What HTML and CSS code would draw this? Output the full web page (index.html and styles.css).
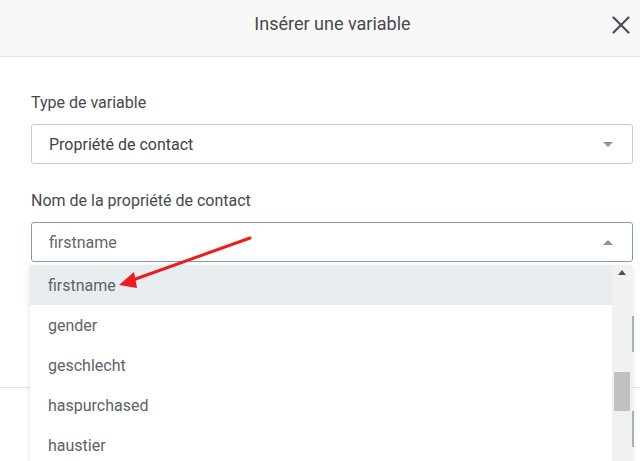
FILE: index.html
```html
<!DOCTYPE html>
<html lang="fr">
<head>
<meta charset="utf-8">
<title>Insérer une variable</title>
<link rel="stylesheet" href="styles.css">
</head>
<body>
<div class="modal">
  <header class="modal-header">
    <span></span>
    <h1 class="modal-title">Insérer une variable</h1>
    <button class="close" aria-label="Fermer">
      <svg width="18" height="18" viewBox="0 0 18 18"><path d="M1.5 1.5 L16.5 16.5 M16.5 1.5 L1.5 16.5" stroke="#454f55" stroke-width="2.2" stroke-linecap="round" fill="none"/></svg>
    </button>
  </header>
  <main class="modal-body">
    <div class="field">
      <label class="label">Type de variable</label>
      <div class="select">
        <span class="value dark">Propriété de contact</span>
        <span class="caret down"></span>
      </div>
    </div>
    <div class="field">
      <label class="label">Nom de la propriété de contact</label>
      <div class="select active">
        <span class="value">firstname</span>
        <span class="caret up"></span>
      </div>
    </div>
  </main>
  <footer class="modal-footer">
    <span class="btn-edge e1"></span>
    <span class="btn-edge e2"></span>
  </footer>

  <div class="dropdown">
    <ul class="options">
      <li class="option selected">firstname</li>
      <li class="option">gender</li>
      <li class="option">geschlecht</li>
      <li class="option">haspurchased</li>
      <li class="option">haustier</li>
    </ul>
    <div class="scrollbar">
      <span class="sb-up"></span>
      <span class="sb-thumb"></span>
    </div>
  </div>

  <svg class="arrow" width="640" height="461" viewBox="0 0 640 461">
    <line x1="250" y1="238" x2="130" y2="281" stroke="#ee1c1c" stroke-width="3" stroke-linecap="round"/>
    <polygon points="119,285 134,272 137,288" fill="#ee1c1c"/>
  </svg>
</div>
</body>
</html>
```
FILE: styles.css
```css
* { box-sizing: border-box; }
html, body {
  margin: 0;
  padding: 0;
  width: 640px;
  height: 461px;
  overflow: hidden;
  background: #fff;
  font-family: Roboto, "Noto Sans", sans-serif;
}
.modal {
  position: relative;
  width: 640px;
  height: 461px;
  display: flex;
  flex-direction: column;
}
.modal-header {
  height: 57px;
  flex: none;
  background: #f8f8f8;
  border-bottom: 1px solid #e4e4e4;
  display: grid;
  grid-template-columns: 60px 1fr 60px;
  align-items: start;
  padding: 11px 0 0 25px;
}
.modal-title {
  margin: 0;
  text-align: center;
  font-size: 18px;
  line-height: 26px;
  font-weight: 400;
  color: #464a4d;
}
.close {
  border: 0;
  background: none;
  padding: 0;
  justify-self: end;
  margin-right: 9px;
  margin-top: 4px;
  width: 20px;
  height: 20px;
  display: flex;
  align-items: center;
  justify-content: center;
}
.modal-body {
  flex: none;
  padding: 36px 7px 0 31px;
  display: flex;
  flex-direction: column;
  gap: 27px;
}
.field {
  display: flex;
  flex-direction: column;
  gap: 11px;
}
.label {
  font-size: 16px;
  color: #444a4e;
  line-height: 20px;
}
.select {
  height: 40px;
  border: 1px solid #c7ccd0;
  border-radius: 3px;
  display: flex;
  align-items: center;
  justify-content: space-between;
  padding: 0 19px 0 17px;
}
.select.active { border-color: #7f9ea6; }
.value {
  font-size: 16px;
  color: #62686c;
}
.value.dark { color: #3d4246; }
.caret {
  width: 0;
  height: 0;
  border-left: 5px solid transparent;
  border-right: 5px solid transparent;
}
.caret.down { border-top: 5px solid #8b949a; }
.caret.up { border-bottom: 5px solid #8b949a; }

.modal-footer {
  position: relative;
  margin-top: 125px;
  border-top: 1px solid #e4e4e4;
  flex: 1;
}
.btn-edge {
  position: absolute;
  left: 632px;
  width: 2px;
  background: #a9bcc3;
}
.e1 { top: -72px; height: 36px; }
.e2 { top: 23px; height: 36px; }

.dropdown {
  position: absolute;
  left: 30px;
  top: 265px;
  width: 602px;
  height: 200px;
  background: #fff;
  display: flex;
  box-shadow: 0 2px 6px rgba(0,0,0,0.12);
}
.options {
  list-style: none;
  margin: 0;
  padding: 0;
  flex: 1;
}
.option {
  height: 40px;
  display: flex;
  align-items: center;
  padding-left: 18px;
  font-size: 16px;
  color: #5d6367;
}
.option.selected { background: #e8edf0; }
.scrollbar {
  position: relative;
  width: 20px;
  background: #f1f1f1;
}
.sb-up {
  position: absolute;
  left: 6px;
  top: 5px;
  width: 0;
  height: 0;
  border-left: 4px solid transparent;
  border-right: 4px solid transparent;
  border-bottom: 5px solid #505050;
}
.sb-thumb {
  position: absolute;
  left: 2px;
  top: 107px;
  width: 16px;
  height: 39px;
  background: #c1c1c1;
}
.arrow {
  position: absolute;
  left: 0;
  top: 0;
  pointer-events: none;
}
```
